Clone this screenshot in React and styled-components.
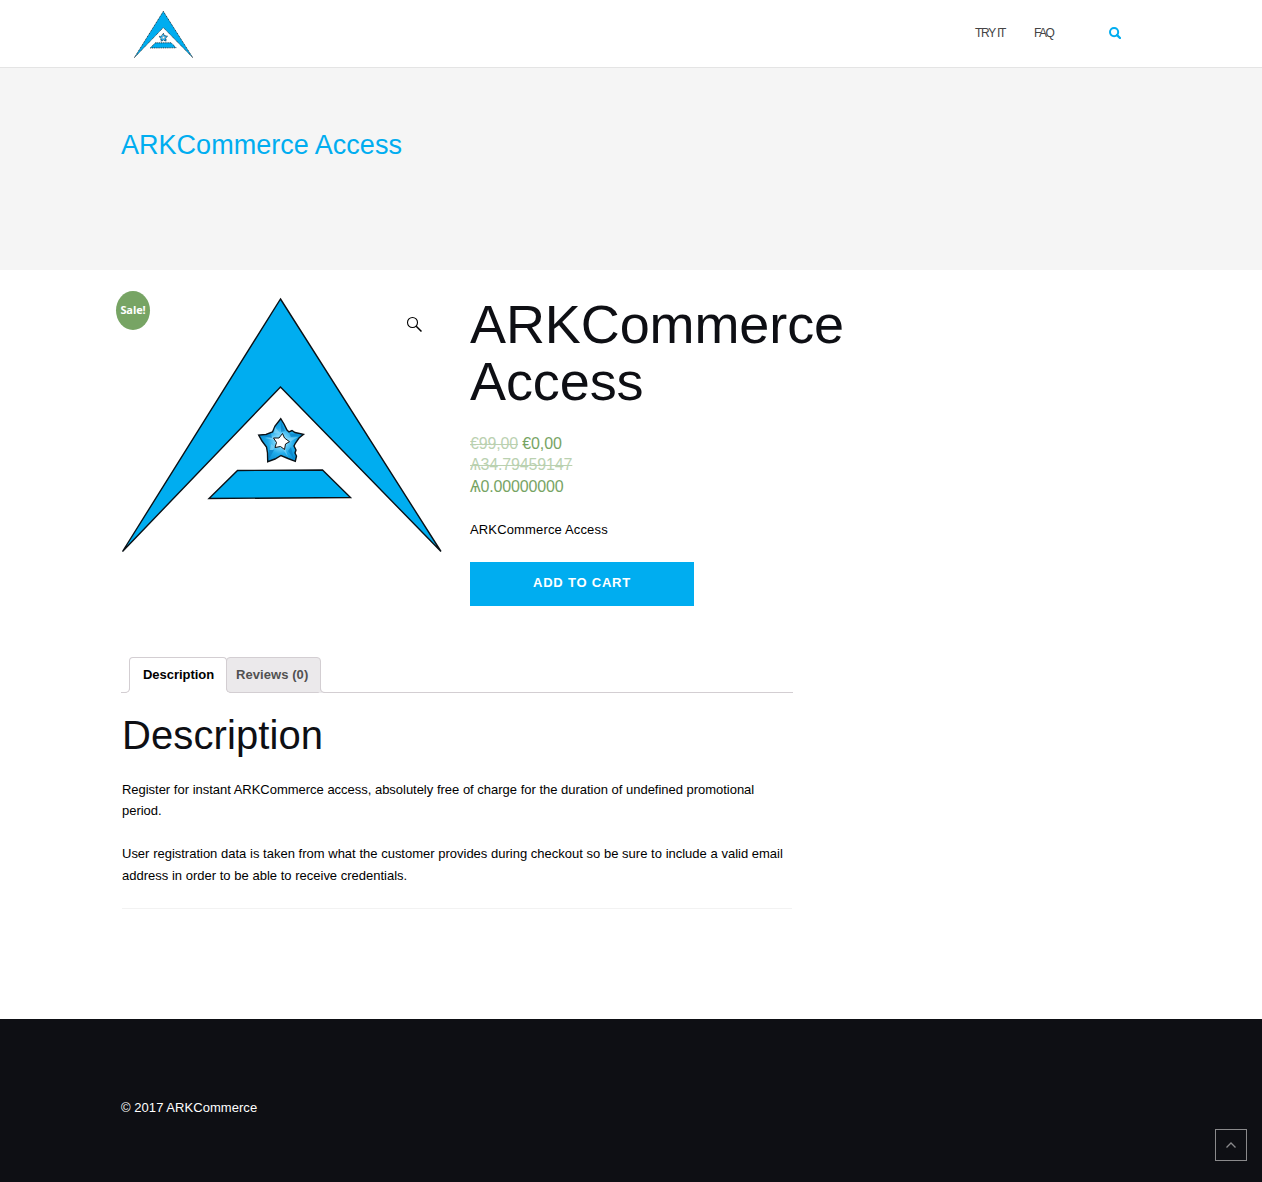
import React from "react";
import styled, { createGlobalStyle } from "styled-components";

const GlobalStyle = createGlobalStyle`
  *, *::before, *::after { box-sizing: border-box; }
  html, body { margin: 0; padding: 0; }
  body {
    background: #fff;
    color: #000;
    font-family: "Liberation Sans", Arial, sans-serif;
    font-size: 13px;
    line-height: 21.5px;
  }
  h1, h2, p { margin: 0; font-weight: 400; }
  a { color: inherit; text-decoration: none; }
`;

const Container = styled.div`
  width: 1020px;
  margin: 0 auto;
`;

const Header = styled.header`
  height: 68px;
  border-bottom: 1px solid #e4e4e4;
`;

const HeaderRow = styled(Container)`
  display: flex;
  align-items: flex-start;
  justify-content: space-between;
  padding: 11px 20px 0 13px;
`;

const Nav = styled.nav`
  display: flex;
  align-items: center;
  padding-top: 11px;
`;

const NavLink = styled.a`
  width: ${(p) => p.$width}px;
  padding-top: 1px;
  color: #444;
  font-size: 12px;
  letter-spacing: ${(p) => p.$spacing}px;
  white-space: nowrap;
`;

const Banner = styled.section`
  height: 202px;
  padding-top: 60px;
  background: #f5f5f5;
`;

const BannerTitle = styled.h1`
  color: #00adf0;
  font-size: 27px;
  line-height: 34px;
  letter-spacing: 0.02px;
`;

const Main = styled(Container)`
  height: 749px;
  padding-top: 27px;
`;

const Product = styled.section`
  display: flex;
  gap: 28px;
  height: 360px;
`;

const Gallery = styled.div`
  position: relative;
  width: 321px;
`;

const SaleBadge = styled.span`
  position: absolute;
  top: -6px;
  left: -5px;
  width: 34px;
  height: 39px;
  border-radius: 50%;
  background: #77a464;
  color: #fff;
  font: 700 11px/38px "Open Sans", sans-serif;
  letter-spacing: -0.1px;
  text-align: center;
`;

const ZoomButton = styled.a`
  position: absolute;
  top: 19px;
  left: 285px;
  display: flex;
`;

const Summary = styled.div`
  width: 400px;
`;

const ProductTitle = styled.h1`
  margin-top: -1px;
  color: #0e0f14;
  font-size: 54px;
  line-height: 57px;
  letter-spacing: -0.1px;
`;

const Prices = styled.p`
  margin-top: 23px;
  color: #77a464;
  font-size: 16px;
  line-height: 21px;
  letter-spacing: -0.15px;
`;

const OldPrice = styled.del`
  opacity: 0.5;
`;

const PriceLine = styled.span`
  display: block;
  height: ${(p) => p.$height}px;
`;

const Excerpt = styled.p`
  margin-top: 21px;
  letter-spacing: 0.15px;
`;

const CartButton = styled.button`
  display: block;
  width: 224px;
  height: 44px;
  margin-top: 22px;
  padding: 0 0 2px;
  border: 0;
  background: #00adf0;
  color: #fff;
  font: 700 13px/42px "Liberation Sans", Arial, sans-serif;
  letter-spacing: 0.8px;
`;

const TabList = styled.div`
  display: flex;
  width: 672px;
  height: 36px;
  padding-left: 8px;
  border-bottom: 1px solid #d3ced2;
`;

const Tab = styled.a`
  position: relative;
  z-index: ${(p) => (p.$active ? 2 : 1)};
  flex: none;
  height: 36px;
  width: ${(p) => p.$width}px;
  margin-left: ${(p) => (p.$active ? 0 : -1)}px;
  padding-left: ${(p) => (p.$active ? 13 : 9)}px;
  border: 1px solid #d3ced2;
  border-bottom-color: ${(p) => (p.$active ? "#fff" : "#d3ced2")};
  border-radius: 4px 4px 0 0;
  background: ${(p) => (p.$active ? "#fff" : "#ebe9eb")};
  color: ${(p) => (p.$active ? "#000" : "#515151")};
  font-weight: 700;
  line-height: 34px;
  letter-spacing: ${(p) => (p.$active ? -0.03 : 0.07)}px;
  white-space: nowrap;

  &::before,
  &::after {
    content: "";
    position: absolute;
    bottom: -1px;
    width: 6px;
    height: 6px;
    border: 0 solid #d3ced2;
  }
  &::before {
    left: -6px;
    border-width: 0 1px 1px 0;
    border-bottom-right-radius: 5px;
    box-shadow: 2px 2px 0 ${(p) => (p.$active ? "#fff" : "#ebe9eb")};
  }
  &::after {
    right: -6px;
    border-width: 0 0 1px 1px;
    border-bottom-left-radius: 5px;
    box-shadow: -2px 2px 0 ${(p) => (p.$active ? "#fff" : "#ebe9eb")};
  }
`;

const Panel = styled.section`
  position: relative;
  z-index: 3;
  width: 670px;
  height: 216px;
  margin-left: 1px;
  padding-top: 21px;
  border-bottom: 1px solid #f2f2f2;
  background: #fff;
`;

const PanelTitle = styled.h2`
  color: #0e0f14;
  font-size: 40px;
  line-height: 43px;
  letter-spacing: 0.1px;
`;

const Paragraph = styled.p`
  margin-top: 21.5px;
  letter-spacing: ${(p) => p.$spacing}px;
  word-spacing: 0.12px;
`;

const Footer = styled.footer`
  height: 163px;
  padding-top: 78px;
  background: #0e0f14;
  color: #fff;
  letter-spacing: 0.05px;
`;

const ScrollTop = styled.a`
  position: fixed;
  right: 15px;
  bottom: 21px;
  display: flex;
  align-items: center;
  justify-content: center;
  width: 32px;
  height: 32px;
  border: 1px solid #8a8a8c;
`;

function Logo({ width, height, outline, dash, preserve = "xMidYMid meet" }) {
  return (
    <svg width={width} height={height} viewBox="0 0 321 256" preserveAspectRatio={preserve}>
      <defs>
        <radialGradient id="star" gradientUnits="userSpaceOnUse" cx="160" cy="144" r="22">
          <stop offset="0.25" stopColor="#7fd6fa" />
          <stop offset="0.6" stopColor="#1fabea" />
          <stop offset="1" stopColor="#0a90d4" />
        </radialGradient>
      </defs>
      <g stroke="#0b1116" strokeWidth={outline} strokeDasharray={dash} strokeLinejoin="miter" strokeMiterlimit="12">
        <path fill="#00adf0" strokeMiterlimit="3" d="M159.5 2 L320 254.5 L159.5 90 L1.5 254.5 Z" />
        <path fill="#00adf0" strokeMiterlimit="3" d="M116.5 173.5 L201.5 173 L229.5 200.5 L88 201.5 Z" />
        <path
          fill="url(#star)"
          strokeMiterlimit="3"
          d="M159.7 121.7 L163 127 L166 133 L168 135 L171 133.5 L174 135.5 L182.5 137.3 L178 141 L174.5 146 L173 149 L175 153 L174 156 L175.5 159 L174.3 164.3 L167 161.5 L160 158.5 L154 162 L146.7 164.7 L146.5 156 L145.5 150 L141 144 L137.7 138 L145 137.5 L151.5 135 L154 129 Z"
        />
      </g>
      <g opacity="0.6">
        <path fill="#8ed9fa" d="M153 136 L154 130 L160 137 Z M165 141 L177 140 L167 146 Z M161 151 L167 160 L164 151 Z M154 150 L148 158 L150 147 Z M153 143 L144 141 L154 139 Z" />
        <path fill="#0879be" d="M160 125 L164 134 L160 135 Z M168 136 L180 138 L170 140 Z M170 150 L173 162 L167 154 Z M148 162 L148 153 L153 153 Z M141 139 L150 137 L151 141 Z" />
      </g>
      <path
        fill="#fff"
        stroke="#111"
        strokeWidth="1"
        d="M161.5 136.5 L163.5 141 L168.5 144.7 L164.5 147 L163.5 152.5 L159.5 149.5 L154 150.5 L155.5 145.5 L152.5 141 L158 141 Z"
      />
    </svg>
  );
}

function SearchIcon() {
  return (
    <svg width="12" height="12" viewBox="0 0 12 12" fill="none" stroke="#00adf0">
      <circle cx="5.1" cy="5.1" r="4.1" strokeWidth="2" />
      <path d="M8.1 8.1 L11 11" strokeWidth="2.3" strokeLinecap="round" />
    </svg>
  );
}

export default function App() {
  return (
    <>
      <GlobalStyle />
      <Header>
        <HeaderRow>
          <Logo width={59} height={47} outline={4} dash="6 4" preserve="none" />
          <Nav>
            <NavLink $width={59} $spacing={-1.25}>TRY IT</NavLink>
            <NavLink $width={75} $spacing={-1.6}>FAQ</NavLink>
            <SearchIcon />
          </Nav>
        </HeaderRow>
      </Header>
      <Banner>
        <Container>
          <BannerTitle>ARKCommerce Access</BannerTitle>
        </Container>
      </Banner>
      <Main>
        <Product>
          <Gallery>
            <Logo width={321} height={256} outline={1.4} />
            <SaleBadge>Sale!</SaleBadge>
            <ZoomButton>
              <svg width="17" height="17" viewBox="0 0 17 17" fill="none" stroke="#000">
                <circle cx="6.5" cy="6.5" r="5" strokeWidth="1.1" />
                <path d="M10.2 10.2 L15.5 15.5" strokeWidth="1.5" />
              </svg>
            </ZoomButton>
          </Gallery>
          <Summary>
            <ProductTitle>ARKCommerce Access</ProductTitle>
            <Prices>
              <PriceLine $height={21}><OldPrice>€99,00</OldPrice> €0,00</PriceLine>
              <PriceLine $height={22}><OldPrice>Ѧ34.79459147</OldPrice></PriceLine>
              <PriceLine $height={21.5}>Ѧ0.00000000</PriceLine>
            </Prices>
            <Excerpt>ARKCommerce Access</Excerpt>
            <CartButton>ADD TO CART</CartButton>
          </Summary>
        </Product>
        <TabList>
          <Tab $active $width={98}>Description</Tab>
          <Tab $width={95}>Reviews (0)</Tab>
        </TabList>
        <Panel>
          <PanelTitle>Description</PanelTitle>
          <Paragraph $spacing={-0.03}>
            Register for instant ARKCommerce access, absolutely free of charge for the duration of undefined promotional period.
          </Paragraph>
          <Paragraph $spacing={-0.01}>
            User registration data is taken from what the customer provides during checkout so be sure to include a valid email address in order to be able to receive credentials.
          </Paragraph>
        </Panel>
      </Main>
      <Footer>
        <Container>© 2017 ARKCommerce</Container>
      </Footer>
      <ScrollTop>
        <svg width="10" height="6" viewBox="0 0 10 6" fill="none" stroke="#8a8a8c" strokeWidth="1.3">
          <path d="M0.5 5.5 L5 1 L9.5 5.5" />
        </svg>
      </ScrollTop>
    </>
  );
}
